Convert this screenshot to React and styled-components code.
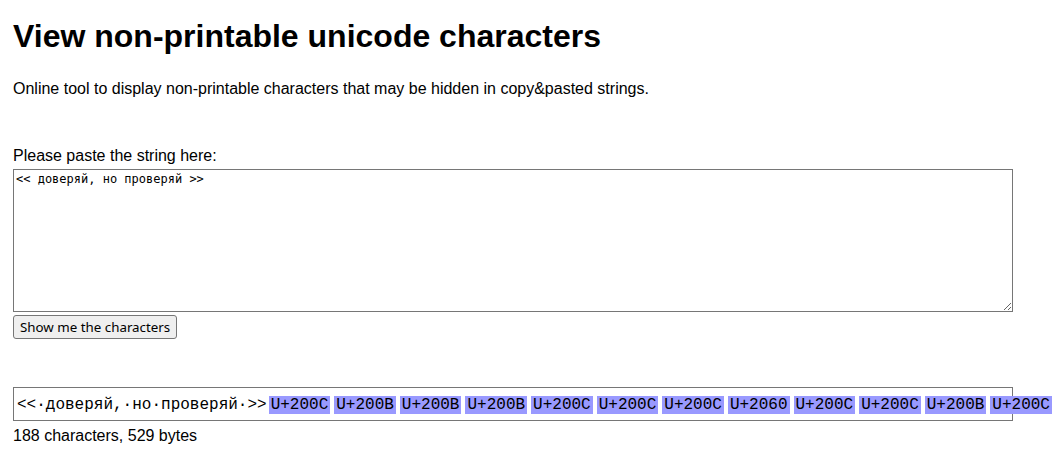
import React from 'react'
import styled, { createGlobalStyle } from 'styled-components'

const GlobalStyle = createGlobalStyle`
  html, body {
    margin: 0;
    overflow-x: hidden;
  }
  body {
    font-family: "Liberation Sans", Arial, sans-serif;
    color: #000;
    background: #fff;
  }
`

const Page = styled.div`
  padding: 18px 13px;
`

const Title = styled.h1`
  margin: 0;
  font-size: 32px;
  line-height: 37px;
  font-weight: bold;
`

const Intro = styled.p`
  margin: 25px 0 0;
  font-size: 16px;
  line-height: 18px;
`

const Form = styled.div`
  margin-top: 49px;
`

const Label = styled.label`
  display: block;
  font-size: 16px;
  line-height: 18px;
`

const Input = styled.textarea`
  display: block;
  box-sizing: border-box;
  width: 1000px;
  height: 143px;
  margin: 4px 0 0;
  padding: 2px;
  border: 1px solid #767676;
  border-radius: 0;
  font-family: "DejaVu Sans Mono", monospace;
  font-size: 12px;
  line-height: 14px;
  color: #000;
  resize: both;
`

const Button = styled.button`
  display: block;
  box-sizing: border-box;
  height: 24px;
  margin-top: 3px;
  padding: 0 6px;
  border: 1px solid #767676;
  border-radius: 3px;
  background: #efefef;
  font-family: "Noto Sans", "Open Sans", sans-serif;
  font-size: 13.33px;
  color: #000;
`

const Output = styled.div`
  box-sizing: border-box;
  width: 1000px;
  height: 34px;
  margin-top: 48px;
  padding: 8px 3px 6px;
  border: 1px solid #767676;
  font-family: "Liberation Mono", monospace;
  font-size: 16px;
  line-height: 18px;
  white-space: nowrap;
`

const Code = styled.span`
  display: inline-block;
  margin: 0 2px;
  padding: 0 2px;
  background: #9999ff;
`

const Stats = styled.div`
  font-size: 16px;
  line-height: 18px;
  margin-top: 6px;
`

const input = '<< доверяй, но проверяй >>'
const codes = ['200C', '200B', '200B', '200B', '200C', '200C', '200C', '2060', '200C', '200C', '200B', '200C', '200B', '2060', '200C', '200B']

export default function App() {
  return (
    <>
      <GlobalStyle />
      <Page>
        <Title>View non-printable unicode characters</Title>
        <Intro>Online tool to display non-printable characters that may be hidden in copy&amp;pasted strings.</Intro>
        <Form>
          <Label htmlFor="src">Please paste the string here:</Label>
          <Input id="src" defaultValue={input} spellCheck={false} />
          <Button>Show me the characters</Button>
        </Form>
        <Output>
          {input.replace(/ /g, '\u00b7')}
          {codes.map((c, i) => (
            <Code key={i}>U+{c}</Code>
          ))}
        </Output>
        <Stats>188 characters, 529 bytes</Stats>
      </Page>
    </>
  )
}
